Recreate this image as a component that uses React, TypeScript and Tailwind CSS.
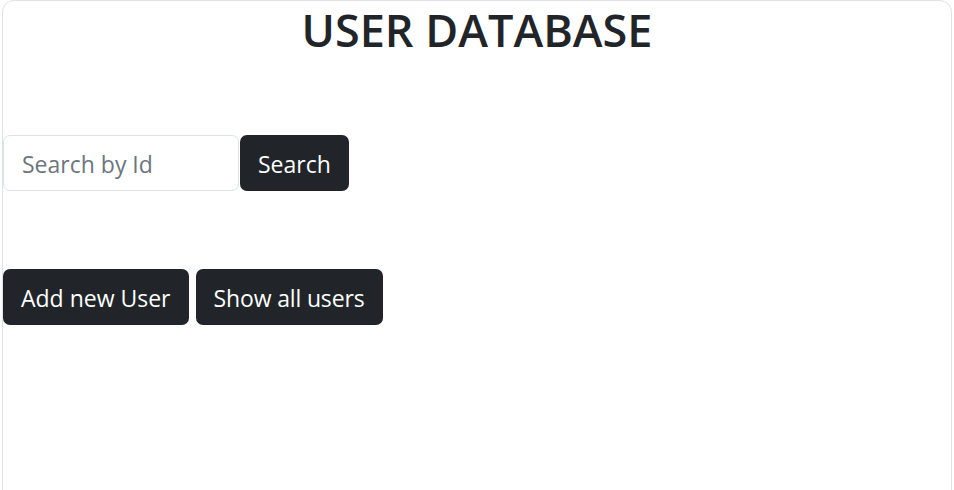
import React from "react";

export default function App() {
  return (
    <div className="w-[954px] h-[490px] overflow-hidden bg-white" style={{ fontFamily: '"Open Sans", "Noto Sans", sans-serif' }}>
      <div className="ml-[2px] w-[950px] h-[520px] border border-[#dee2e6] rounded-t-[12px] text-[#212529]">
        <h1 className="pt-[1px] text-center text-[45px] leading-[56px] font-semibold">USER DATABASE</h1>
        <div className="mt-[77px] flex items-stretch">
          <input
            className="w-[236px] h-[56px] border border-[#dee2e6] rounded-[7px] px-[18px] pt-[2px] text-[23px] text-[#212529] placeholder:text-[#6c757d] outline-none"
            placeholder="Search by Id"
          />
          <button className="ml-[1px] h-[56px] px-[18px] pt-[2px] rounded-[7px] bg-[#212529] text-white text-[23px]">Search</button>
        </div>
        <div className="mt-[78px] flex gap-[7px]">
          <button className="h-[56px] px-[18px] pt-[2px] rounded-[7px] bg-[#212529] text-white text-[23px]">Add new User</button>
          <button className="h-[56px] px-[18px] pt-[2px] rounded-[7px] bg-[#212529] text-white text-[23px] tracking-[-0.15px]">Show all users</button>
        </div>
      </div>
    </div>
  );
}
